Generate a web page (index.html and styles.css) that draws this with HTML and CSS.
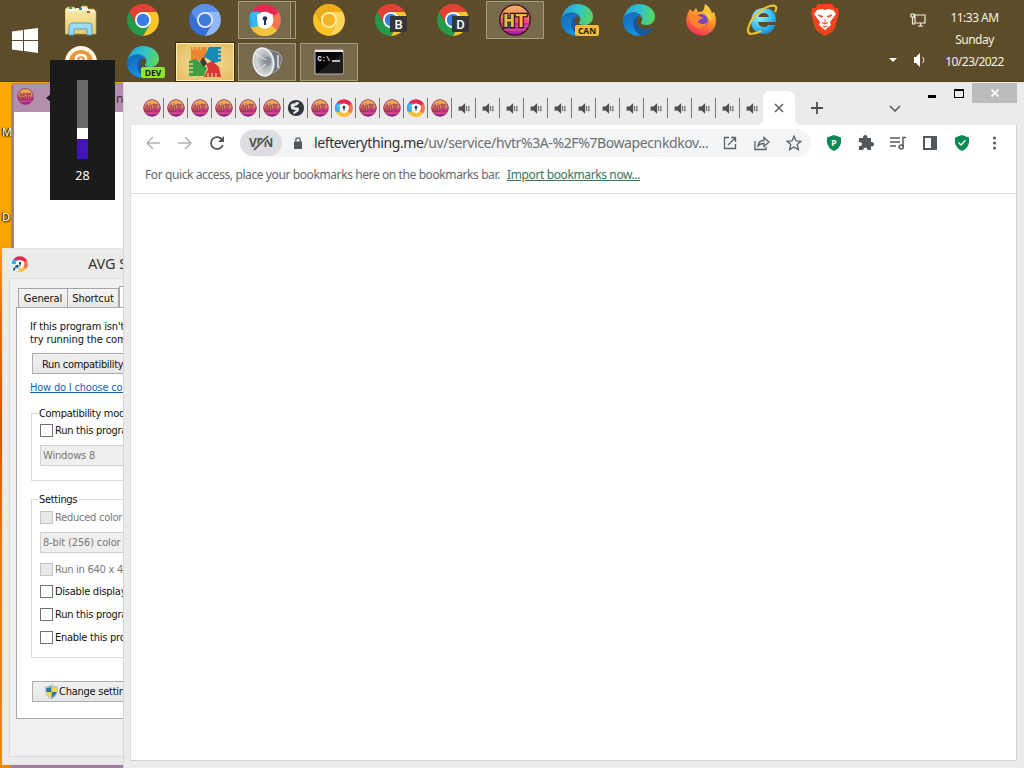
FILE: index.html
```html
<!DOCTYPE html>
<html lang="en">
<head>
<meta charset="utf-8">
<title>Desktop</title>
<link rel="stylesheet" href="styles.css">
</head>
<body>
<svg class="defs" width="0" height="0" aria-hidden="true">
  <defs>
    <linearGradient id="sunset" x1="0" y1="0" x2="0" y2="1"><stop offset="0" stop-color="#f6b54f"/><stop offset=".4" stop-color="#ee8d62"/><stop offset=".6" stop-color="#cc2c90"/><stop offset="1" stop-color="#a51cae"/></linearGradient>
    <linearGradient id="edge-top" x1="0" y1=".3" x2="1" y2=".5"><stop offset="0" stop-color="#249fda"/><stop offset=".5" stop-color="#2fc3cf"/><stop offset="1" stop-color="#5cd65a"/></linearGradient>
    <linearGradient id="edge-side" x1="0" y1="0" x2=".4" y2="1"><stop offset="0" stop-color="#1464b4"/><stop offset="1" stop-color="#1592e0"/></linearGradient>
    <linearGradient id="flame" x1=".8" y1="0" x2=".3" y2="1"><stop offset="0" stop-color="#ffe14a"/><stop offset=".45" stop-color="#ff9428"/><stop offset="1" stop-color="#f5295c"/></linearGradient>
    <radialGradient id="ie-blue" cx=".35" cy=".3" r=".8"><stop offset="0" stop-color="#a6efff"/><stop offset=".6" stop-color="#3bb9ed"/><stop offset="1" stop-color="#1184ca"/></radialGradient>
    <linearGradient id="folder" x1="0" y1="0" x2="0" y2="1"><stop offset="0" stop-color="#f9efb0"/><stop offset="1" stop-color="#eacb69"/></linearGradient>
    <radialGradient id="cone" cx=".6" cy=".5" r=".6"><stop offset="0" stop-color="#77797e"/><stop offset=".25" stop-color="#a2a6ad"/><stop offset=".8" stop-color="#d5d7da"/><stop offset="1" stop-color="#888c94"/></radialGradient>
  </defs>
  <symbol id="ht" viewBox="0 0 32 32"><circle cx="16" cy="16" r="15.2" fill="url(#sunset)" stroke="#3c1022" stroke-width="1.3"/><path d="M4 8h24M2 12h28M2 18h28M2 22h28M5 26h22" stroke="#f4a45e" stroke-opacity=".55"/><text x="16" y="22.5" text-anchor="middle" font-family="Liberation Mono" font-size="20" font-weight="700" fill="#f7b64c" stroke="#2c101b" stroke-width="2.4" paint-order="stroke">HT</text></symbol>
  <symbol id="ht-small" viewBox="0 0 16 16"><circle cx="8" cy="8" r="7.4" fill="url(#sunset)" stroke="#7d2a4c" stroke-width=".7"/><path d="M2 4.5h12M2 12.5h12" stroke="#e58a68" stroke-opacity=".6"/><path d="M3.5 5V11.5M6.7 5V11.5M3.5 8H6.7M8.6 5.6H13M10.7 5V11.5" stroke="#723043" stroke-width="1.9" fill="none"/><path d="M3.5 5.5V11M6.7 5.5V11M3.5 8H6.7M9 5.6H12.6M10.7 5.6V11" stroke="#d98749" stroke-width=".8" fill="none"/></symbol>
  <symbol id="chrome-shape" viewBox="0 0 32 32"><path class="c-top" d="M2.2 8A16 16 0 0 1 29.8 8L16 9Z"/><path class="c-top" d="M2.2 8L9.5 20L16 8H29.8A16 16 0 0 0 2.2 8"/><path class="c-left" d="M2.2 8A16 16 0 0 0 16 32L23 19.8L9.1 19.8Z"/><path class="c-right" d="M16 8H29.8A16 16 0 0 1 16 32L23 20Z"/><circle class="c-ring" cx="16" cy="16" r="8"/><circle class="c-dot" cx="16" cy="16" r="6.2"/></symbol>
  <symbol id="edge" viewBox="0 0 32 32"><path d="M.5 15C2 6 8 0 16 0C25 0 32 6 32 12.5C32 18 28 21 24 21C20 21 18 20 18 18.7C18 18 19.3 17.5 19.3 15C19.3 11.5 15.5 8.5 11 8.5C5 8.5 1 13 .3 18Z" fill="url(#edge-top)"/><path d="M0 17C0 12 5 8.5 11 8.5C15.5 8.5 19 11 19.3 14.5C18.5 12.5 16.5 12 15 12.5C11.5 13.5 10 17 10.5 20C11 26 16 31.5 20 31.5C8 33.5 0 26 0 17Z" fill="url(#edge-side)"/><path d="M10.3 20C10.3 15.5 12.5 13 15 12.5C12 17 14 25 22 25.5C25 25.5 27 24.8 29.5 23.3C30.3 23 30.5 23.5 30 24.3C27 29 23 31.5 19 31.8C14 30.5 10.5 25 10.3 20Z" fill="#1758a3"/></symbol>
  <symbol id="secure" viewBox="0 0 32 32"><circle cx="16" cy="16" r="11" fill="#fff"/><g fill="none" stroke-width="7.5"><path d="M5 22A12 12 0 0 1 6.5 8.5" stroke="#29a4ea"/><path d="M25.5 23.5A12 12 0 0 1 5 21.5" stroke="#f6c33f"/><path d="M25 8A12 12 0 0 1 25.3 23.8" stroke="#f1764f"/><path d="M6.2 9A12 12 0 0 1 26.5 10.5" stroke="#e72751"/></g><path d="M1 11Q6 6 12 8L8 14L9 22L4 24Z" fill="#35b7ef"/><path d="M8 10.5Q16 7 24 10.5Q24 20 16 25Q8 20 8 10.5Z" fill="#fff"/><circle cx="16" cy="14.5" r="2.3" fill="#24344c"/><path d="M15 15h2v6h-2z" fill="#24344c"/></symbol>
  <symbol id="globe" viewBox="0 0 16 16"><circle cx="8" cy="8" r="7.2" fill="#30363c"/><path d="M3 5.5Q5 3 7 4L8 2.5L11 3L9 5.5L6 6.5Q7 8 10 7.5Q11.5 9 10 11L6 13.5L5.5 12L8 10L4 9Z" fill="#e9eaeb"/></symbol>
  <symbol id="audio" viewBox="0 0 16 16"><path d="M2 5.5h3.5l4.5-4v13l-4.5-4H2z" fill="#4e4e4e"/><path d="M12 5v6M14.7 4.5v7" stroke="#5c5c5c" stroke-width="1.3"/></symbol>
</svg>

<main class="desktop">
  <span class="shortcut-label label-m">M</span>
  <span class="shortcut-label label-d">D</span>

  <section class="back-window">
    <header class="back-title"><svg class="fav"><use href="#ht-small"/></svg><svg class="back-arrow" viewBox="0 0 10 10"><path d="M0 5L6 0V3H10V7H6V10Z" fill="#261825"/></svg><span>n</span></header>
  </section>

  <section class="dialog">
    <header class="dialog-title"><svg class="dialog-icon" viewBox="0 0 32 32"><use href="#secure"/><path d="M0 16h14v14H0z" fill="#e8f2f5"/><path d="M2 29Q2 22 8 21L6 18H13V26L10 23Q5 24 6 29Z" fill="#20628b"/></svg><span>AVG Secure Browser</span></header>
    <div class="dialog-body">
      <nav class="dialog-tabs"><span class="dtab general">General</span><span class="dtab short">Shortcut</span><span class="dtab current"></span></nav>
      <div class="sheet">
        <p class="intro"><span>If this program isn't working</span><br>try running the compatibility</p>
        <div class="button run">Run compatibility</div>
        <a class="help">How do I choose compatibility</a>
        <div class="group mode">
          <span class="legend">Compatibility mode</span>
          <div class="check"><i></i><span>Run this program</span></div>
          <div class="select">Windows 8</div>
        </div>
        <div class="group settings">
          <span class="legend">Settings</span>
          <div class="check off"><i></i><span>Reduced color</span></div>
          <div class="select depth">8-bit (256) color</div>
          <div class="check off"><i></i><span>Run in 640 x 480</span></div>
          <div class="check"><i></i><span>Disable display</span></div>
          <div class="check"><i></i><span>Run this program</span></div>
          <div class="check"><i></i><span>Enable this program</span></div>
        </div>
        <div class="button change"><svg width="15" height="16" viewBox="0 0 16 16"><path d="M8 0Q12 2.5 15 2Q16 12 8 16Q0 12 1 2Q4 2.5 8 0Z" fill="#b8c2c8"/><path d="M8 2V8H2.5V3.6Q6 3.6 8 2ZM8 8H13.4Q12.5 12 8 14.3Z" fill="#2478b9"/><path d="M8 2Q10 3.6 13.6 3.6L13.5 8H8ZM8 8V14.3Q3.5 12 2.6 8Z" fill="#f2d844"/></svg><span>Change settings</span></div>
      </div>
    </div>
  </section>

  <section class="browser">
    <header class="tabstrip">
      <div class="tabs">
        <span class="tab"><svg><use href="#ht-small"/></svg></span><span class="tab"><svg><use href="#ht-small"/></svg></span><span class="tab"><svg><use href="#ht-small"/></svg></span><span class="tab"><svg><use href="#ht-small"/></svg></span><span class="tab"><svg><use href="#ht-small"/></svg></span><span class="tab"><svg><use href="#ht-small"/></svg></span><span class="tab"><svg><use href="#globe"/></svg></span><span class="tab"><svg><use href="#ht-small"/></svg></span><span class="tab"><svg><use href="#secure"/></svg></span><span class="tab"><svg><use href="#ht-small"/></svg></span><span class="tab"><svg><use href="#ht-small"/></svg></span><span class="tab"><svg><use href="#secure"/></svg></span><span class="tab"><svg><use href="#ht-small"/></svg></span>
        <span class="tab sound"><svg><use href="#audio"/></svg></span><span class="tab sound"><svg><use href="#audio"/></svg></span><span class="tab sound"><svg><use href="#audio"/></svg></span><span class="tab sound"><svg><use href="#audio"/></svg></span><span class="tab sound"><svg><use href="#audio"/></svg></span><span class="tab sound"><svg><use href="#audio"/></svg></span><span class="tab sound"><svg><use href="#audio"/></svg></span><span class="tab sound"><svg><use href="#audio"/></svg></span><span class="tab sound"><svg><use href="#audio"/></svg></span><span class="tab sound"><svg><use href="#audio"/></svg></span><span class="tab sound"><svg><use href="#audio"/></svg></span><span class="tab sound"><svg><use href="#audio"/></svg></span><span class="tab sound last"><svg><use href="#audio"/></svg></span>
      </div>
      <div class="active-tab"><svg width="10" height="10" viewBox="0 0 10 10"><path d="M1 1L9 9M9 1L1 9" stroke="#5c5e60" stroke-width="1.5"/></svg></div>
      <svg class="new-tab" viewBox="0 0 12 12"><path d="M6 0V12M0 6H12" stroke="#4d4f51" stroke-width="1.8"/></svg>
      <svg class="tab-search" viewBox="0 0 12 7"><path d="M1 1L6 6L11 1" fill="none" stroke="#5e6062" stroke-width="1.7"/></svg>
      <div class="window-buttons"><svg class="min" viewBox="0 0 8 3"><path d="M0 0h8v3H0z"/></svg><svg class="max" viewBox="0 0 10 9"><path d="M0 0H10V9H0ZM1 2V8H9V2Z" fill-rule="evenodd"/></svg><span class="close"><svg viewBox="0 0 8 8"><path d="M.5 .5L7.5 7.5M7.5 .5L.5 7.5" stroke="#fff" stroke-width="1.6"/></svg></span></div>
    </header>
    <div class="page">
      <div class="toolbar">
        <div class="nav-icons">
          <svg viewBox="0 0 14 14"><path d="M14 7H1M7 1L1 7L7 13" stroke="#b1b3b5"/></svg>
          <svg viewBox="0 0 14 14"><path d="M0 7H13M7 1L13 7L7 13" stroke="#b1b3b5"/></svg>
          <svg viewBox="0 0 14 14"><path d="M12.2 4A6 6 0 1 0 12.7 9" stroke="#54575a" stroke-width="1.8"/><path d="M14 0V6H8Z" fill="#54575a"/></svg>
        </div>
        <div class="omnibox">
          <span class="vpn">VPN<svg viewBox="0 0 26 16"><path d="M7 15L20 1" stroke="#dcdee1" stroke-width="3.4"/><path d="M6 15L20 1" stroke="#505257" stroke-width="1.7"/></svg></span>
          <svg class="lock" viewBox="0 0 8 12"><path d="M1.8 5V3a2.2 2.2 0 0 1 4.4 0v2" fill="none" stroke="#55585b" stroke-width="1.2"/><path d="M0 4.5h8V12H0z" fill="#55585b"/></svg>
          <span class="url"><b>lefteverything.me</b>/uv/service/hvtr%3A-%2F%7Bowapecnkdkov...</span>
          <span class="omni-actions">
            <svg viewBox="0 0 16 16"><path d="M7 2.5H2.5V13.5H13.5V9M9 2.5H13.5V7M13.3 2.7L6 10"/></svg>
            <svg viewBox="0 0 16 16"><path d="M1 6V14.5H12V12M4 11Q4.5 5.5 10 5.5V2.5L15 7L10 11.5V8.5Q6 8.5 4 11Z"/></svg>
            <svg viewBox="0 0 16 16"><path d="M8 1.2L10 5.9L15 6.3L11.2 9.6L12.4 14.6L8 12L3.6 14.6L4.8 9.6L1 6.3L6 5.9Z"/></svg>
          </span>
        </div>
        <div class="extensions">
          <svg viewBox="0 0 16 16"><path d="M8 0L15 2.4V8Q14 13 8 16Q2 13 1 8V2.4Z" fill="#0c8955"/><text x="8" y="11" font-size="8.5" font-family="Noto Sans" font-weight="700" text-anchor="middle" fill="#fff">P</text></svg>
          <svg viewBox="0 0 16 16"><path d="M2 3H5Q5 0 7.2 0Q9.5 0 9.5 3H13V7Q16 7 16 9.3Q16 11.5 13 11.5V15H9.5Q9.5 12.5 7.3 12.5Q5.2 12.5 5.2 15H1V11Q4 11 4 9Q4 7 1 7V3Z" fill="#55585b"/></svg>
          <svg viewBox="0 0 16 16"><path d="M0 3H10M0 7H10M0 11H6M13 12V2.5H16" fill="none" stroke="#55585b" stroke-width="1.5"/><circle cx="11.2" cy="12" r="2" fill="none" stroke="#55585b" stroke-width="1.5"/></svg>
          <svg viewBox="0 0 16 16"><path d="M1 1H15V15H1ZM3 3V13H9V3Z" fill="#55585b" fill-rule="evenodd"/></svg>
          <svg viewBox="0 0 16 16"><path d="M8 0L15 2.4V8Q14 13 8 16Q2 13 1 8V2.4Z" fill="#0c8955"/><path d="M4.5 7.5L7 10L11.5 5.3" fill="none" stroke="#fff" stroke-width="1.3"/></svg>
          <svg viewBox="0 0 16 16"><g fill="#55585b"><circle cx="8.5" cy="3" r="1.5"/><circle cx="8.5" cy="8" r="1.5"/><circle cx="8.5" cy="13" r="1.5"/></g></svg>
        </div>
      </div>
      <div class="bookmarks"><span class="hint">For quick access, place your bookmarks here on the bookmarks bar.</span><a>Import bookmarks now...</a></div>
      <div class="viewport"></div>
    </div>
  </section>

  <header class="taskbar">
    <svg class="start" viewBox="0 0 26 25"><path d="M0 3.6L11 2V12H0ZM12 1.8L26 0V12H12ZM0 13H11V23L0 21.5ZM12 13H26V25L12 23Z" fill="#fff"/></svg>
    <div class="apps">
      <span class="app"><svg viewBox="0 0 32 32"><path d="M0 5L3 3H9L11 5H15L17 2H22L23 5H29L31 8V30H0Z" fill="url(#folder)" stroke="#c3a34f" stroke-width=".7"/><path d="M2 6H12M11 5H23M23 7H30" stroke="#fffce8" stroke-width="2"/><path d="M4 4h3" stroke="#27a15a" stroke-width="2"/><path d="M14 5h3" stroke="#297ec8" stroke-width="2"/><path d="M22 8h3" stroke="#d94a36" stroke-width="2"/><path d="M4 31V22Q5 19 8 19H24Q27 19 27 22V31H22V25H9V31Z" fill="#9edcf3" stroke="#4ca0c8"/></svg></span>
      <span class="app"><svg class="chrome"><use href="#chrome-shape"/></svg></span>
      <span class="app"><svg class="chrome chromium"><use href="#chrome-shape"/></svg></span>
      <span class="app open stack"><svg><use href="#secure"/></svg></span>
      <span class="app"><svg class="chrome canary"><use href="#chrome-shape"/></svg></span>
      <span class="app"><svg class="chrome"><use href="#chrome-shape"/></svg><em class="letter">B</em></span>
      <span class="app"><svg class="chrome"><use href="#chrome-shape"/></svg><em class="letter">D</em></span>
      <span class="app open"><svg><use href="#ht"/></svg></span>
      <span class="app"><svg><use href="#edge"/></svg><em class="channel can">CAN</em></span>
      <span class="app"><svg><use href="#edge"/></svg></span>
      <span class="app"><svg viewBox="0 0 32 32"><path d="M3 9L5 5L8 8L11 4L13 8Q18 8 19 5L20 0Q25 3 27 9L29 8Q34 21 26 28Q17 35 7 28Q-2 20 3 9Z" fill="url(#flame)"/><circle cx="16" cy="17" r="7" fill="#7544c4"/><path d="M4 13Q8 9 14 12L19 14Q14 15 13 18Q17 22 23 18Q20 25 13 24Q5 22 4 13Z" fill="#ff8330"/><path d="M19 7Q27 10 27 18L22 12Z" fill="#ffd640"/></svg></span>
      <span class="app"><svg viewBox="0 0 32 32"><path d="M29 18H11Q12 23 17 23Q20 23 21.5 21H28.5Q25.5 30 17 30Q4 29 4 17Q5 4 17 4Q30 5 29 18ZM11.2 13H22Q21 9 17 9Q12 9 11.2 13Z" fill="url(#ie-blue)"/><path d="M28 8Q32 0 23 2Q12 5 4 17Q-2 29 4 30Q9 30 14 27" fill="none" stroke="#edc22d" stroke-width="2.2"/></svg></span>
      <span class="app"><svg viewBox="0 0 32 32"><path d="M9 0H23L26 4L29 4L30 9L26 24Q24 28 16 32Q8 28 6 24L2 9L3 4H6Z" fill="#f5421e"/><path d="M8 6L13 5L16 6L19 5L24 6L27 10L21 18L22 21L16 26L10 21L11 18L5 10Z" fill="#fff"/><path d="M9 11L13.5 12.2L12.5 13.5ZM23 11L18.5 12.2L19.5 13.5ZM16 15V18M13 18.5L16 20L19 18.5M13.5 22L16 23L18.5 22" fill="#f2502e" stroke="#f2502e"/></svg></span>
      <span class="app"><svg viewBox="0 0 32 32"><circle cx="16" cy="16" r="16" fill="#fff6e8"/><circle cx="16" cy="16" r="12" fill="#e8983a"/><path d="M11 22V13Q11 9 16 9Q21 9 21 13V22M16 12V19" fill="none" stroke="#fff" stroke-width="2.5"/></svg></span>
      <span class="app"><svg><use href="#edge"/></svg><em class="channel dev">DEV</em></span>
      <span class="app attention"><svg viewBox="0 0 32 32"><path d="M2 1H18L17 8Q18 13 13 17L9 14H2Z" fill="#ec8630"/><path d="M20 1H32V15L25 17L19 13L15 11Z" fill="#168ab3"/><path d="M0 15L7 13L13 18L18 22L15 30H0Z" fill="#3f9f45"/><path d="M17 18L23 15L30 21L32 31H15L19 23Z" fill="#d93636"/><path d="M14 11L18 17L15 21L11 16Z" fill="#3e3a2b"/><path d="M4 1V4M8 1V4M12 1V4M29 4H32M29 8H32M29 12H32M0 18H4M0 22H4M0 26H4M19 31V27M23 31V27M27 31V27" stroke="#e7c980" stroke-width="1.3"/></svg></span>
      <span class="app open"><svg viewBox="0 0 32 32"><path d="M16 3L28 7L31 12L28 23L18 29Z" fill="#6f7582" stroke="#a6abb5"/><path d="M27 9V22" stroke="#c9ccd1" stroke-width="2"/><ellipse cx="12.5" cy="16" rx="10" ry="14" transform="rotate(-10 12.5 16)" fill="url(#cone)" stroke="#eceef0" stroke-width="1.8"/><ellipse cx="17" cy="15" rx="3.5" ry="4.5" fill="#8b8f98"/><path d="M5 8L15 14M6 25L15 18" stroke="#e6e8eb"/></svg></span>
      <span class="app open"><svg viewBox="0 0 32 32"><path d="M2 4H30V28H2Z" fill="#050505" stroke="#bebebe"/><path d="M2 5H30" stroke="#e8e8e8" stroke-width="2"/><path d="M4 27L30 7V27Z" fill="#1c1c1c"/><text x="4.5" y="14.5" font-family="Liberation Mono" font-size="7" font-weight="700" fill="#fff">C:\</text><path d="M19 15h8" stroke="#fff" stroke-width="1.4"/></svg></span>
    </div>
    <div class="tray">
      <svg viewBox="0 0 16 16"><path d="M5 3H15V11H5ZM8 14H13M10.5 11V14M1 2H4V5H1ZM2.5 5V12H5" fill="none" stroke="#f5f1e8" stroke-width="1.2"/></svg>
      <div><svg class="tray-arrow" viewBox="0 0 8 4"><path d="M0 0H8L4 4Z" fill="#fff"/></svg><svg viewBox="0 0 16 16"><path d="M2 5H4L8 1V15L4 11H2Z" fill="#fff"/><path d="M10.5 5Q13 8 10.5 11" fill="none" stroke="#d6ccba" stroke-width="1.2"/></svg></div>
    </div>
    <div class="clock"><span class="time">11:33 AM</span><span class="day">Sunday</span><span class="date">10/23/2022</span></div>
  </header>

  <aside class="volume"><div class="track"><i></i></div><span>28</span></aside>
</main>
</body>
</html>
```
FILE: styles.css
```css
* { box-sizing: border-box; }
body { margin: 0; }
svg { display: block; flex: none; }
.defs { position: absolute; }
.desktop { position: relative; width: 1024px; height: 768px; overflow: hidden; background: linear-gradient(#ffad00 0, #faa400 240px, #df7200 320px, #d95400 430px, #e48500 560px, #e18a16 768px); font-family: "Noto Sans", sans-serif; }
.shortcut-label { position: absolute; left: 2px; font-size: 11px; line-height: 14px; color: #fff; text-shadow: 1px 1px 2px #000, -1px 0 1px #000; }
.label-m { top: 125px; }
.label-d { top: 210px; }

.taskbar { position: absolute; inset: 0 0 auto; height: 82px; background: #5d4c29; display: flex; border-bottom: 1px solid #514323; }
.start { width: 26px; height: 25px; margin: 28px 14px 0 12px; }
.apps { display: grid; grid-template-columns: repeat(13, 58px); grid-template-rows: 38px 38px; gap: 4px; padding-top: 1px; }
.app { position: relative; display: flex; align-items: center; justify-content: center; }
.app svg { width: 32px; height: 32px; }
.open { background: #776a4c; border: 1px solid #a69c80; }
.stack { box-shadow: inset -4px 0 #625333, inset -5px 0 #a69c80; }
.stack svg { margin-right: 5px; }
.attention { background: radial-gradient(#f5dda0, #e4bd60); border: 1px solid #ffefb6; outline: 1px solid #3b2c10; }
.chrome { --top: #e34133; --left: #249b4b; --right: #fbc52c; --dot: #397de5; --ring: #fff; }
.chromium { --top: #5b91ed; --left: #386fd2; --right: #91b9fa; --dot: #4279d8; --ring: #e0ecff; }
.canary { --top: #edac1b; --left: #ffc421; --right: #ffd65a; --dot: #f2b329; --ring: #fff0a8; }
.c-top { fill: var(--top); }
.c-left { fill: var(--left); }
.c-right { fill: var(--right); }
.c-dot { fill: var(--dot); }
.c-ring { fill: var(--ring); }
.letter { position: absolute; left: 28px; top: 15px; width: 17px; height: 16px; background: #343638; color: #fff; font: 500 13px/17px Roboto, sans-serif; text-align: center; }
.channel { position: absolute; left: 27px; top: 24px; width: 24px; height: 11px; border-radius: 2px; color: #201c0b; font: 700 8.5px/11px "Open Sans", sans-serif; text-align: center; }
.can { background: #f7bd3b; }
.dev { background: #8ee62b; }
.tray { width: 46px; margin-left: 34px; padding-top: 12px; }
.tray > svg { width: 16px; height: 16px; margin-left: 22px; }
.tray > div { display: flex; align-items: center; margin-top: 24px; }
.tray > div svg:last-child { width: 16px; height: 16px; margin-left: 15px; }
.tray-arrow { width: 8px; height: 4px; margin-left: 1px; }
.clock { width: 81px; display: flex; flex-direction: column; align-items: center; color: #f6f0e4; font-size: 12px; line-height: 22px; padding-top: 7px; letter-spacing: -.52px; }

.back-window { position: absolute; left: 11px; top: 83px; width: 120px; height: 685px; border: solid #a37d9e; border-width: 1px 0 3px 3px; border-radius: 4px 0 0; background: #fff; }
.back-title { height: 28px; display: flex; align-items: center; background: #b48eaf; font-size: 12px; }
.fav { width: 17px; height: 17px; margin: -3px 0 0 3px; }
.back-arrow { width: 10px; height: 10px; margin-left: 12px; }
.back-title span { margin-left: 60px; color: #3e2c3f; }

.volume { position: absolute; left: 50px; top: 60px; width: 65px; height: 140px; background: #1b1b1b; color: #fff; display: flex; flex-direction: column; align-items: center; padding-top: 20px; font-size: 12.5px; }
.track { width: 11px; height: 79px; background: #696969; padding-top: 48px; }
.track i { display: block; height: 31px; background: #4216b3; border-top: 11px solid #fff; }
.volume > span { margin-top: 8px; line-height: 18px; }

.dialog { position: absolute; left: 2px; top: 248px; width: 140px; height: 517px; background: #ebebeb; border: 1px solid #e2e2df; font: 11px "DejaVu Sans Condensed", "DejaVu Sans", sans-serif; color: #111; white-space: nowrap; }
.dialog-title { height: 29px; display: flex; align-items: center; font: 14.5px/26px "Noto Sans", sans-serif; letter-spacing: -.35px; color: #353535; }
.dialog-icon { width: 16px; height: 16px; margin-left: 9px; }
.dialog-title span { margin: -2px 0 0 60px; letter-spacing: -.1px; }
.dialog-body { margin-left: 6px; height: 479px; padding: 8px 0 0 7px; border: 1px solid #d9d9d9; background: #f0f0f0; }
.dialog-tabs { display: flex; height: 20px; align-items: flex-end; }
.dtab { height: 19px; border: 1px solid #a4a4a4; border-bottom: 0; background: linear-gradient(#f4f4f4, #e7e7e7); line-height: 19px; text-align: center; letter-spacing: -.1px; }
.general { width: 50px; margin-left: 1px; }
.short { width: 51px; border-left: 0; }
.current { width: 20px; height: 21px; background: #fff; }
.sheet { width: 140px; height: 412px; margin-left: -1px; border: 1px solid #aaa; background: #fff; padding: 12px 0 0 14px; }
.intro { margin: 0 0 7px -1px; line-height: 13px; letter-spacing: -.12px; }
.button { width: 130px; height: 21px; border: 1px solid #acacac; background: linear-gradient(#f1f1f1, #e5e5e5); line-height: 21px; }
.run { margin-left: 1px; padding-left: 9px; letter-spacing: -.3px; }
.help { display: block; color: #1268b5; text-decoration: underline; line-height: 14px; margin: 7px 0 0 -1px; letter-spacing: -.2px; }
.group { position: relative; width: 140px; border: 1px solid #d9d9d9; padding: 9px 0 0 8px; }
.mode { height: 68px; margin-top: 18px; }
.settings { height: 159px; margin-top: 18px; padding-top: 10px; }
.legend { position: absolute; left: 6px; top: -7px; padding: 0 2px 0 1px; background: #fff; line-height: 14px; letter-spacing: -.3px; }
.check { display: flex; height: 14px; align-items: center; gap: 2px; letter-spacing: -.25px; }
.check i { width: 13px; height: 13px; border: 1px solid #727272; background: #fff; }
.off { color: #777; }
.off i { background: #e8e8e8; border-color: #c4c4c4; }
.select { height: 21px; width: 130px; margin-top: 8px; padding-left: 2px; border: 1px solid #d0d0d0; background: #efefef; color: #777; line-height: 20px; letter-spacing: -.15px; }
.depth + .check { margin-top: 9px; }
.depth { margin-top: 8px; }
.depth ~ .check + .check { margin-top: 9px; }
.depth + .check + .check.check { margin-top: 8px; }
.change { margin: 23px 0 0 1px; display: flex; align-items: center; padding-left: 11px; letter-spacing: -.25px; }

.browser { position: absolute; left: 124px; top: 82px; width: 900px; height: 686px; background: #ebebeb; border: solid #f0e9df; border-width: 1px 0 0; box-shadow: -1px 0 #d6d6d6; padding: 0 7px 7px 7px; }
.tabstrip { height: 42px; display: flex; align-items: flex-start; }
.tabs { display: flex; margin-left: 9px; padding-top: 15px; }
.tab { width: 24px; height: 20px; border-right: 1px solid #777; display: flex; align-items: center; padding-left: 3px; }
.tab svg { width: 18px; height: 18px; }
.sound svg { width: 13px; height: 13px; margin-left: 2px; }
.last { border-right-color: transparent; }
.active-tab { position: relative; width: 32px; height: 34px; margin: 8px 0 0 -1px; border-radius: 7px 7px 0 0; background: #fff; display: flex; justify-content: center; align-items: center; }
.active-tab::before, .active-tab::after { content: ""; position: absolute; bottom: 0; width: 7px; height: 7px; }
.active-tab::before { left: -7px; background: radial-gradient(circle at 0 0, transparent 7px, #fff 7.5px); }
.active-tab::after { right: -7px; background: radial-gradient(circle at 100% 0, transparent 7px, #fff 7.5px); }
.new-tab { width: 12px; height: 12px; margin: 19px 0 0 16px; }
.tab-search { width: 12px; height: 7px; margin: 22px 0 0 66px; }
.window-buttons { display: flex; margin-left: auto; }
.min { width: 8px; height: 3px; margin-top: 12px; }
.max { width: 10px; height: 9px; margin: 6px 8px 0 18px; }
.close { width: 45px; height: 20px; background: #bcbcbc; display: grid; place-items: center; }
.close svg { width: 8px; height: 8px; }
.page { height: 636px; background: #fff; border-right: 1px solid #d4d4d4; border-bottom: 1px solid #cfcfcf; box-shadow: -1px 0 #dedede; }
.toolbar { height: 36px; display: flex; align-items: center; padding-left: 15px; }
.nav-icons { display: flex; gap: 18px; fill: none; stroke-width: 1.5; }
.nav-icons svg { width: 14px; height: 14px; }
.omnibox { width: 571px; height: 28px; margin-left: 16px; border-radius: 14px; background: #f4f5f6; display: flex; align-items: center; }
.vpn { position: relative; width: 42px; height: 26px; border-radius: 13px; background: #dcdee1; color: #505257; font: 700 12px/26px "Noto Sans", sans-serif; text-align: center; letter-spacing: -.4px; }
.vpn svg { position: absolute; left: 8px; top: 5px; width: 26px; height: 16px; }
.lock { width: 8px; height: 12px; margin-left: 12px; }
.url { width: 397px; margin-left: 12px; white-space: nowrap; color: #6c6f72; font-size: 14px; line-height: 24px; letter-spacing: -.395px; }
.url b { font-weight: 400; color: #303336; }
.omni-actions { display: flex; gap: 16px; margin-left: 11px; fill: none; stroke: #5e6163; stroke-width: 1.3; }
.omni-actions svg { width: 16px; height: 16px; }
.extensions { display: flex; gap: 16px; margin-left: 15px; }
.extensions svg { width: 16px; height: 16px; }
.bookmarks { height: 33px; border-bottom: 1px solid #dedede; display: flex; padding-left: 14px; font-size: 12px; line-height: 28px; color: #66696b; white-space: nowrap; }
.hint { width: 362px; letter-spacing: -.4px; }
.bookmarks a { color: #38765d; text-decoration: underline; letter-spacing: -.38px; }
```
